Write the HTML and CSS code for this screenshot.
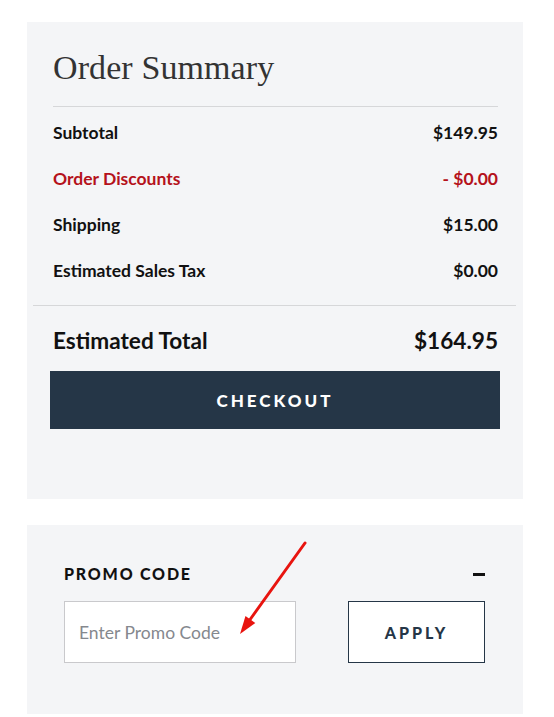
FILE: index.html
```html
<!DOCTYPE html>
<html>
<head>
<meta charset="utf-8">
<link rel="stylesheet" href="styles.css">
</head>
<body>
<div class="page">
  <section class="card summary">
    <h1 class="title">Order Summary</h1>
    <div class="rows">
      <div class="row"><span>Subtotal</span><span>$149.95</span></div>
      <div class="row discount"><span>Order Discounts</span><span>- $0.00</span></div>
      <div class="row"><span>Shipping</span><span>$15.00</span></div>
      <div class="row"><span>Estimated Sales Tax</span><span>$0.00</span></div>
    </div>
    <div class="total"><span>Estimated Total</span><span>$164.95</span></div>
    <button class="checkout">CHECKOUT</button>
  </section>
  <section class="card promo">
    <div class="promo-head"><span class="promo-label">PROMO CODE</span><span class="minus"></span></div>
    <div class="promo-form">
      <input class="promo-input" type="text" placeholder="Enter Promo Code">
      <button class="apply">APPLY</button>
    </div>
    <svg class="arrow" width="84" height="100" viewBox="0 0 84 100">
      <line x1="77" y1="4" x2="21" y2="82" stroke="#e8140f" stroke-width="3" stroke-linecap="round"/>
      <polygon points="12,95 17.5,76.9 27.3,83.9" fill="#e8140f"/>
    </svg>
  </section>
</div>
</body>
</html>
```

FILE: styles.css
```css
* { box-sizing: border-box; }
html, body { margin: 0; padding: 0; background: #ffffff; }
body { font-family: Lato, "Liberation Sans", sans-serif; color: #111; }
.page { padding: 22px 31px 0 27px; display: flex; flex-direction: column; gap: 26px; }
.card { background: #f4f5f7; width: 496px; }
.summary { padding: 26px 0 70px; }
.title {
  font-family: "Liberation Serif", "DejaVu Serif", serif;
  font-weight: 400; font-size: 34px; color: #333;
  margin: 0 25px 0 26px; padding-bottom: 18px; line-height: 40px;
  border-bottom: 1px solid #d6d7d9;
  letter-spacing: 0.1px;
}
.rows { padding: 2px 18px 12px 20px; border-bottom: 1px solid #d6d7d9; margin: 0 7px 0 6px; }
.row { display: flex; justify-content: space-between; align-items: center; height: 46px; font-size: 17.5px; font-weight: 700; color: #111; }
.row.discount { color: #b5121b; }
.total { display: flex; justify-content: space-between; align-items: center; height: 65px; padding-top: 4px; margin: 0 25px 0 26px; font-size: 22.6px; font-weight: 700; color: #111; }
.checkout {
  display: block; width: 450px; height: 58px; margin: 0 0 0 23px;
  background: #253647; color: #fff; border: 0;
  font-family: Lato, sans-serif; font-weight: 900; font-size: 17px; letter-spacing: 3px;
}
.promo { position: relative; height: 189px; padding: 38px 38px 0 37px; }
.promo-head { display: flex; justify-content: space-between; align-items: center; height: 20px; }
.promo-label { font-family: Lato, sans-serif; font-weight: 900; font-size: 16px; letter-spacing: 1.8px; color: #111; }
.minus { width: 12px; height: 3px; background: #111; margin-top: 3px; }
.promo-form { display: flex; justify-content: space-between; margin-top: 18px; }
.promo-input {
  width: 232px; height: 62px; border: 1px solid #c9c9cc; background: #fff;
  padding: 0 14px; font-family: Lato, sans-serif; font-size: 17.5px; color: #333; outline: none;
}
.promo-input::placeholder { color: #85888e; }
.apply {
  width: 137px; height: 62px; background: #fff; border: 1px solid #253647;
  font-family: Lato, sans-serif; font-weight: 900; font-size: 16px; letter-spacing: 3px; color: #253647;
}
.arrow { position: absolute; left: 201px; top: 14px; }
```
